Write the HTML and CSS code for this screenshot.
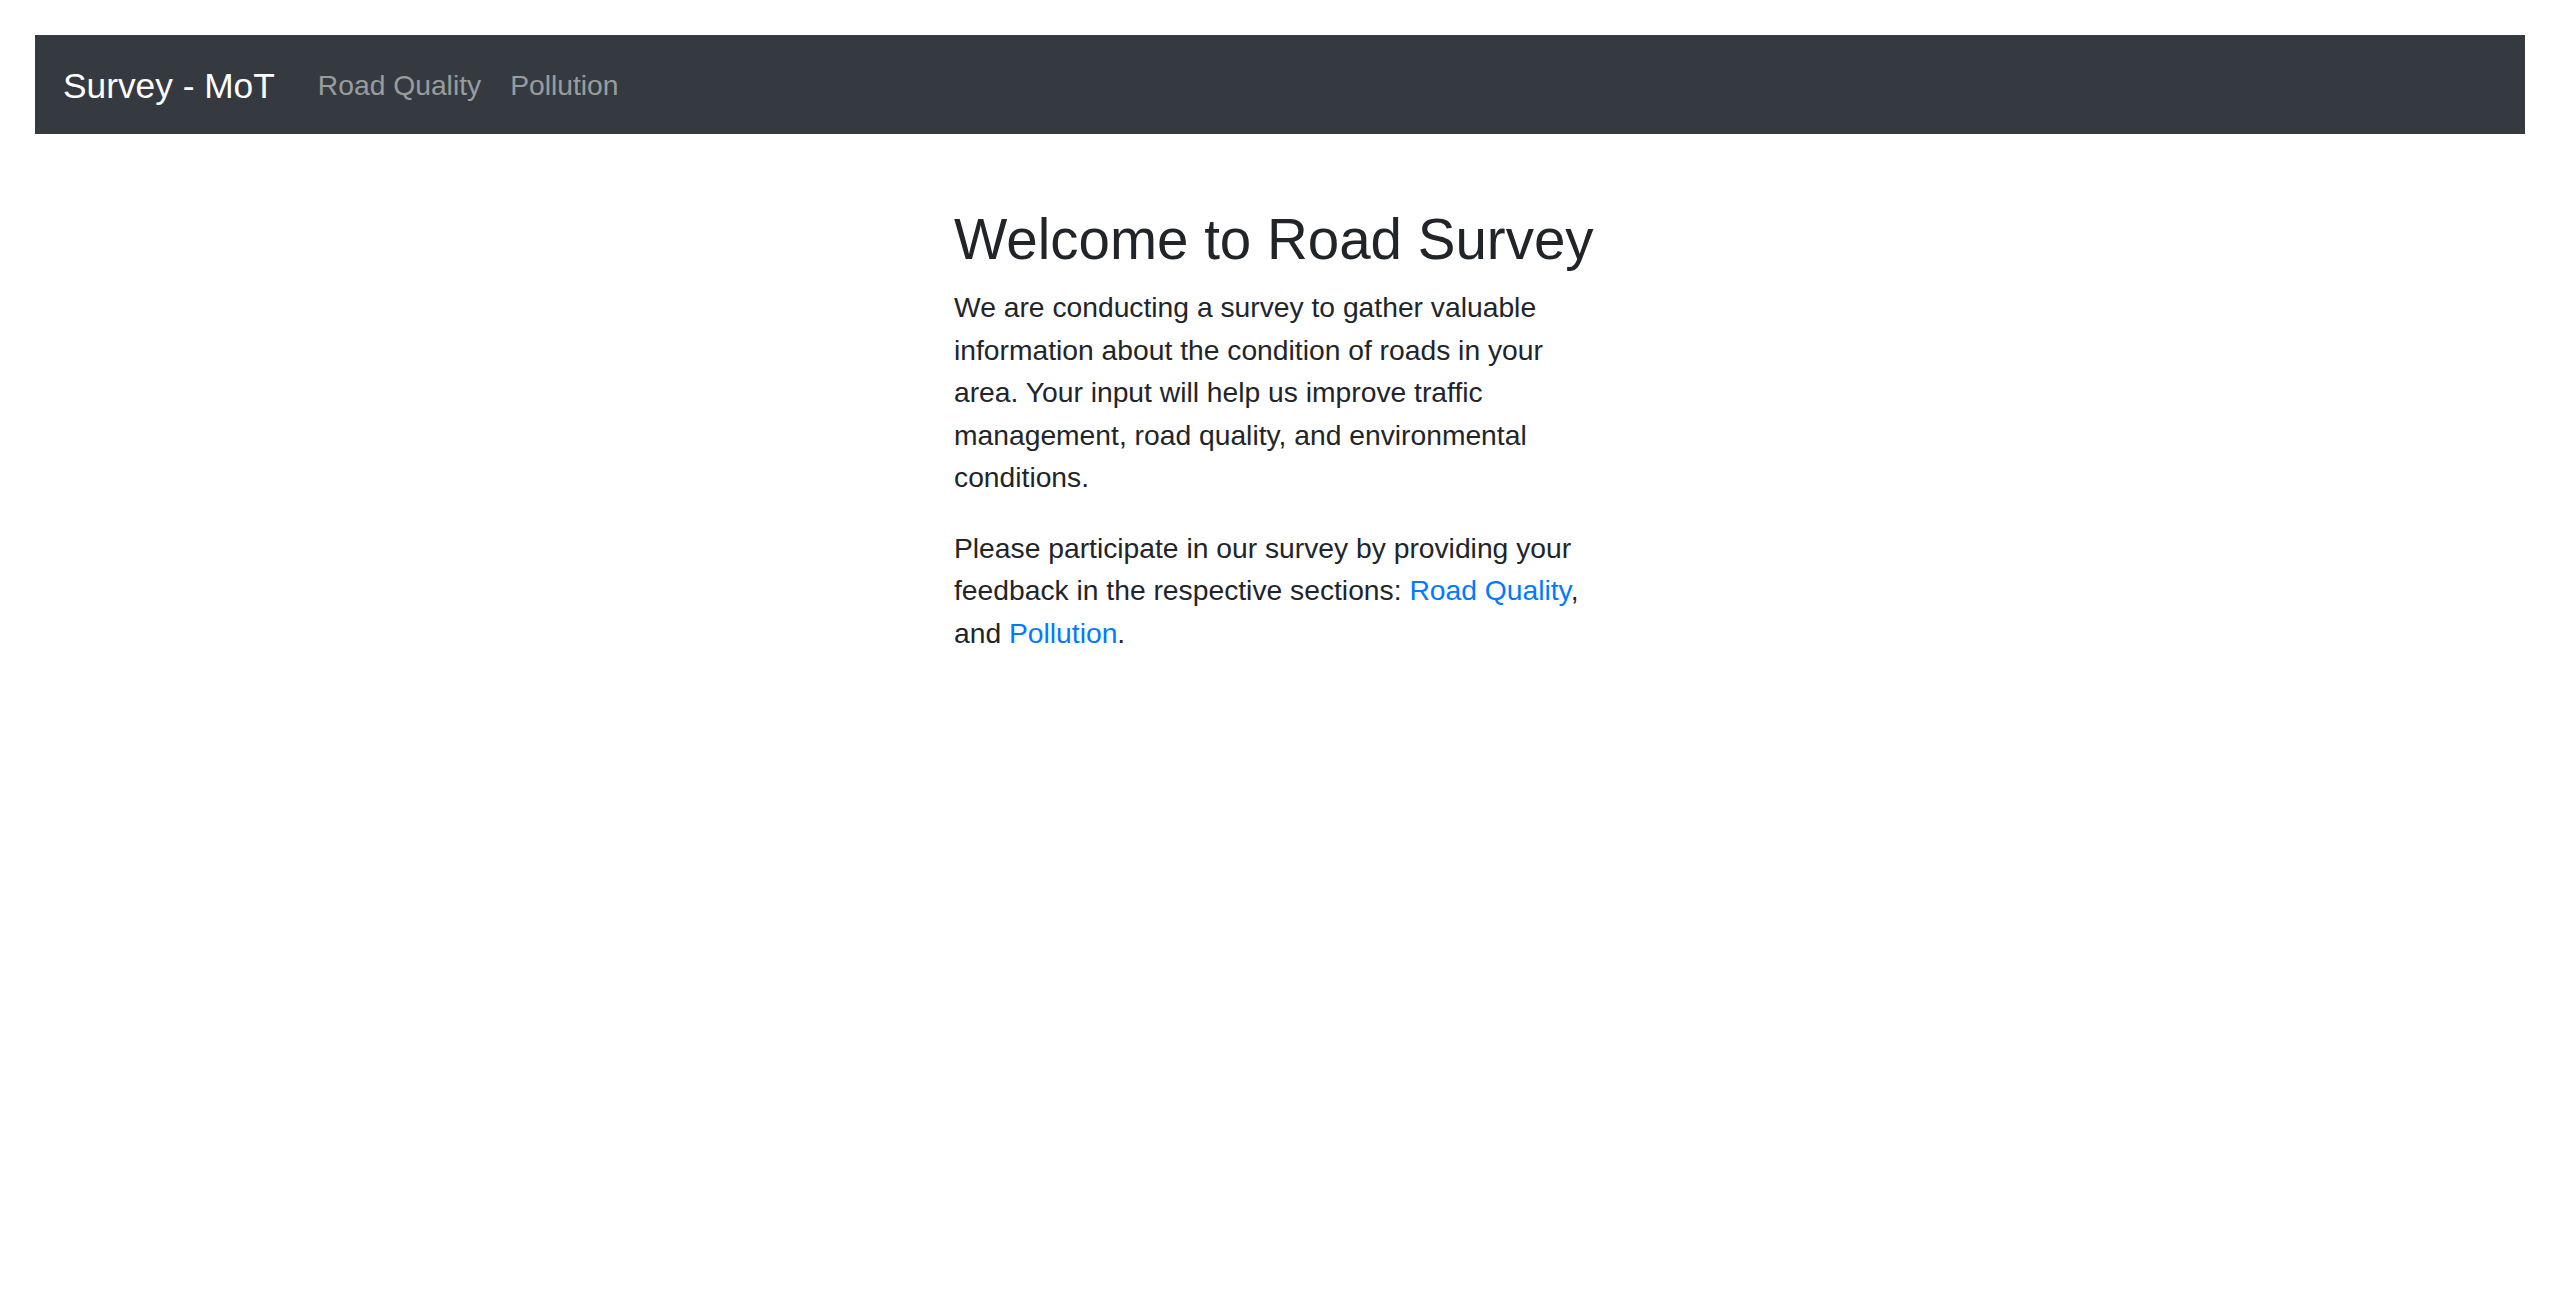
FILE: index.html
```html
<!DOCTYPE html>
<html lang="en">
<head>
<meta charset="utf-8">
<title>Survey - MoT</title>
<link rel="stylesheet" href="styles.css">
</head>
<body>
<nav class="navbar">
  <a class="brand" href="#">Survey - MoT</a>
  <ul class="nav">
    <li><a class="nav-link" href="#">Road Quality</a></li>
    <li><a class="nav-link" href="#">Pollution</a></li>
  </ul>
</nav>
<main class="content">
  <h1 class="title">Welcome to Road Survey</h1>
  <p class="text">We are conducting a survey to gather valuable information about the condition of roads in your area. Your input will help us improve traffic management, road quality, and environmental conditions.</p>
  <p class="text">Please participate in our survey by providing your feedback in the respective sections: <a class="link" href="#">Road&nbsp;Quality</a>, and <a class="link" href="#">Pollution</a>.</p>
</main>
</body>
</html>
```

FILE: styles.css
```css
* { box-sizing: border-box; }
html, body { margin: 0; padding: 0; }
body {
  background: #fff;
  color: #212529;
  font-family: "Liberation Sans", Arial, sans-serif;
  font-size: 28.25px;
  line-height: 42.4px;
  padding: 35px;
}
.navbar {
  background: #343a40;
  height: 99px;
  display: flex;
  align-items: center;
  padding: 0 28px;
}
.brand {
  color: #fff;
  text-decoration: none;
  font-size: 35.3px;
  line-height: 52px;
  margin-right: 28.5px;
  padding-top: 2px;
}
.nav {
  list-style: none;
  margin: 0;
  padding: 0;
  display: flex;
  padding-top: 1px;
}
.nav-link {
  display: block;
  padding: 0 14.5px;
  color: rgba(255, 255, 255, 0.5);
  text-decoration: none;
  font-size: 28.25px;
  line-height: 42px;
}
.content {
  width: 645px;
  margin: 71.5px 0 0 919px;
}
.title {
  font-size: 56.5px;
  font-weight: 400;
  line-height: 1.2;
  margin: 0 0 13px 0;
}
.text {
  margin: 0 0 28.5px 0;
}
.link {
  color: #007bff;
  text-decoration: none;
}
```
